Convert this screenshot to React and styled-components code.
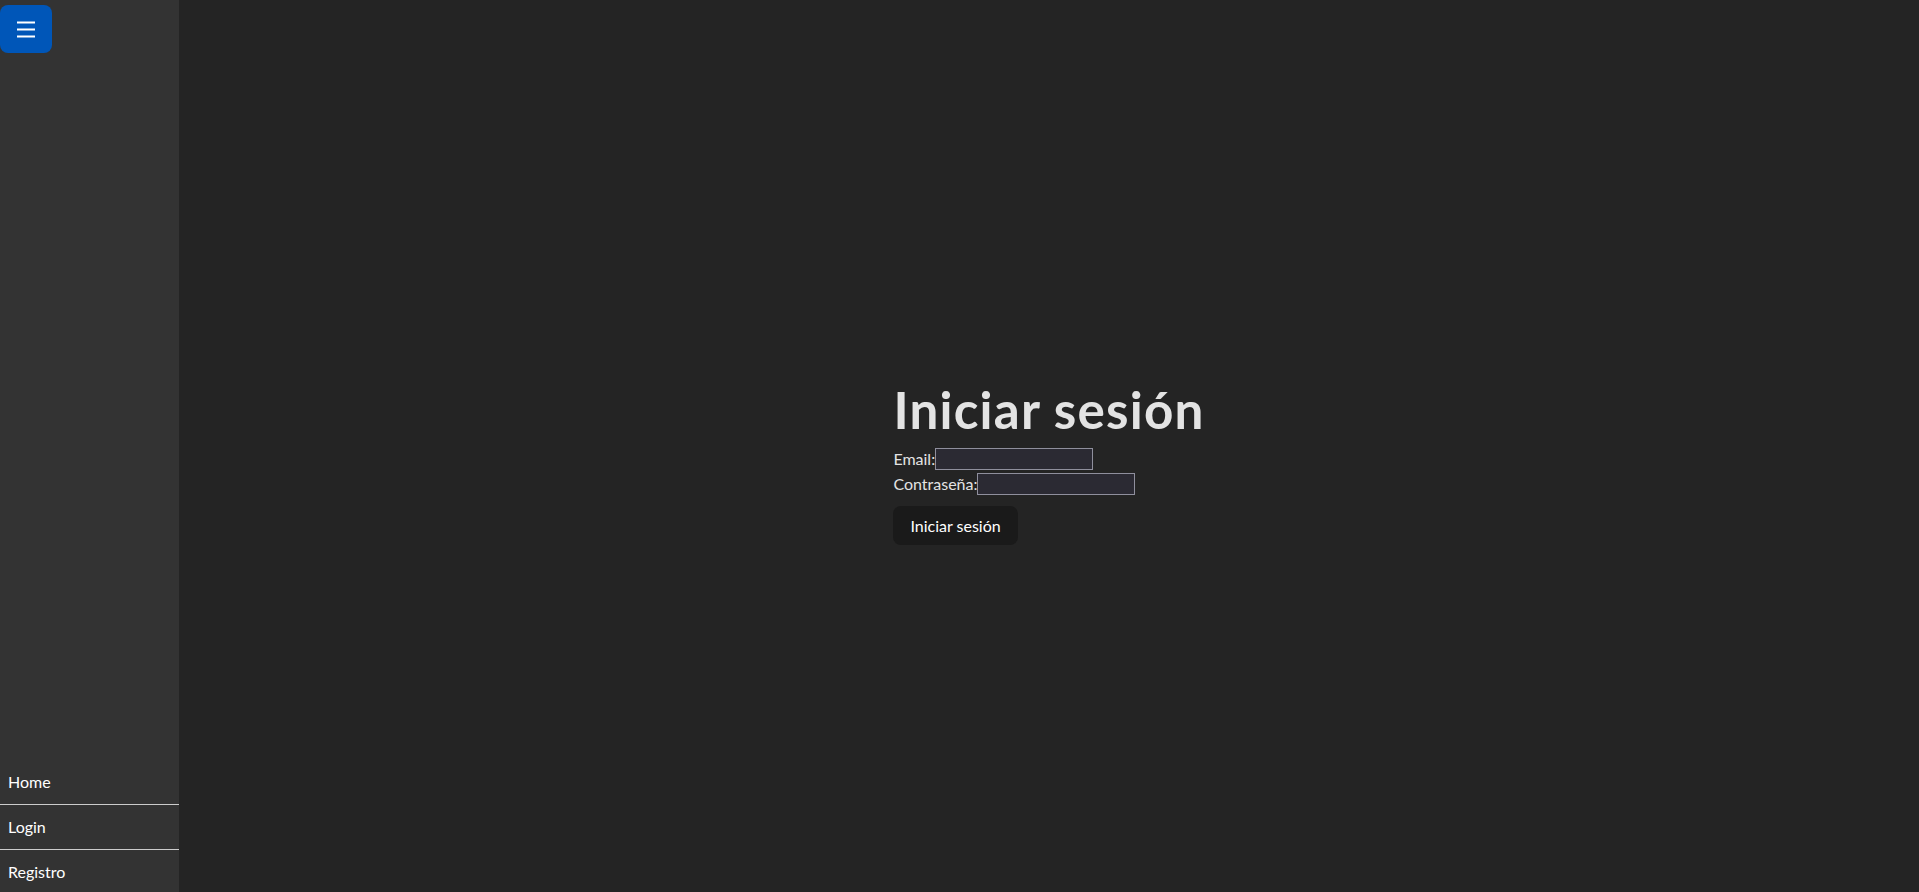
import React from "react";
import styled, { createGlobalStyle } from "styled-components";

const Global = createGlobalStyle`
  html, body { margin: 0; padding: 0; height: 100%; overflow: hidden; }
  body {
    background: #242424;
    color: rgba(255,255,255,0.87);
    font-family: "Lato", "Open Sans", sans-serif;
    font-size: 16px;
    line-height: 1.5;
  }
  #root { height: 100%; }
`;

const Page = styled.div`
  display: flex;
  height: 100vh;
`;

const Sidebar = styled.aside`
  width: 179px;
  flex: 0 0 179px;
  background: #333333;
  display: flex;
  flex-direction: column;
  justify-content: space-between;
`;

const MenuButton = styled.button`
  margin-top: 5px;
  width: 52px;
  height: 48px;
  border: none;
  border-radius: 8px;
  background: #0056b8;
  display: flex;
  align-items: center;
  justify-content: center;
  padding: 0;
  cursor: pointer;
`;

const Nav = styled.nav`
  display: flex;
  flex-direction: column;
  margin-bottom: -3px;
`;

const NavItem = styled.a`
  display: block;
  padding: 10px 8px;
  line-height: 24px;
  color: #ffffff;
  text-decoration: none;
  border-bottom: 1px solid #cccccc;
`;

const Main = styled.main`
  flex: 1;
  display: flex;
  align-items: center;
  justify-content: center;
`;

const Card = styled.div`
  display: flex;
  flex-direction: column;
  align-items: flex-start;
`;

const Title = styled.h1`
  margin: 34px 0 9px;
  font-size: 51.2px;
  line-height: 1.1;
  font-weight: 700;
  letter-spacing: 1.2px;
  color: #e3e3e3;
`;

const Row = styled.label`
  display: flex;
  align-items: center;
  height: 25px;
  color: #e3e3e3;
`;

const Input = styled.input`
  box-sizing: border-box;
  width: 158px;
  height: 22px;
  background: #2b2a33;
  border: 1px solid #8f8f9d;
  border-radius: 0;
  color: #fff;
  padding: 1px 3px;
  font-size: 13px;
  margin: 0;
`;

const Submit = styled.button`
  margin-top: 9px;
  height: 39px;
  padding: 0 16px;
  border: 1px solid transparent;
  border-radius: 8px;
  background: #1a1a1a;
  color: #ffffff;
  font-family: inherit;
  font-size: 16px;
  font-weight: 400;
  cursor: pointer;
`;

const Burger = () => (
  <svg width="20" height="18" viewBox="0 0 20 18">
    <rect x="1" y="1.5" width="18" height="2" fill="#fff" />
    <rect x="1" y="8.5" width="18" height="2" fill="#fff" />
    <rect x="1" y="15.5" width="18" height="2" fill="#fff" />
  </svg>
);

export default function App() {
  return (
    <>
      <Global />
      <Page>
        <Sidebar>
          <MenuButton aria-label="menu">
            <Burger />
          </MenuButton>
          <Nav>
            <NavItem href="#">Home</NavItem>
            <NavItem href="#">Login</NavItem>
            <NavItem href="#">Registro</NavItem>
          </Nav>
        </Sidebar>
        <Main>
          <Card>
            <Title>Iniciar sesión</Title>
            <Row>
              Email:<Input type="email" />
            </Row>
            <Row>
              Contraseña:<Input type="password" />
            </Row>
            <Submit type="button">Iniciar sesión</Submit>
          </Card>
        </Main>
      </Page>
    </>
  );
}
